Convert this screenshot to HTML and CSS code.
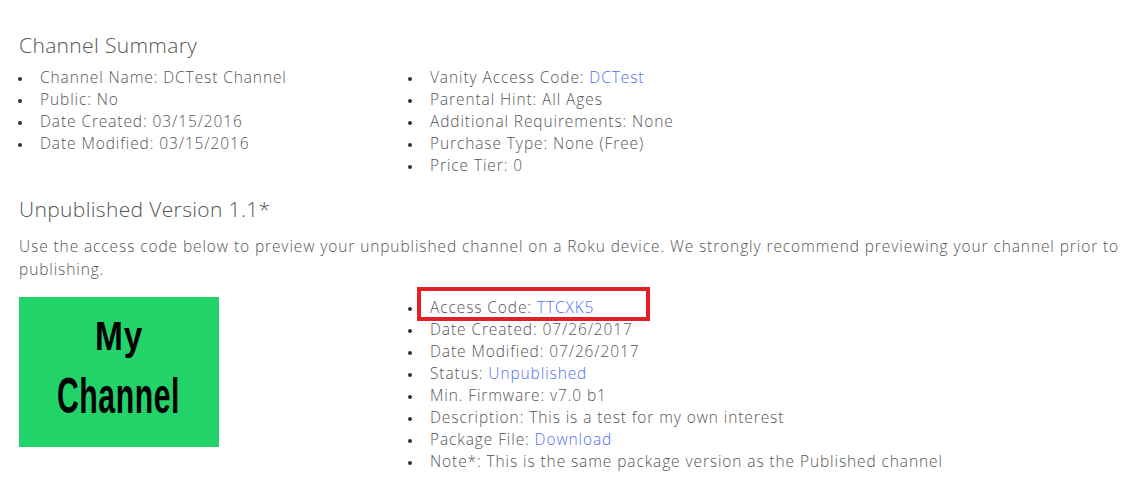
FILE: index.html
```html
<!DOCTYPE html>
<html lang="en">
<head>
<meta charset="utf-8">
<title>Channel Summary</title>
<link rel="stylesheet" href="styles.css">
</head>
<body>
<main class="page">
  <h2 class="heading">Channel Summary</h2>
  <div class="cols">
    <ul class="info">
      <li>Channel Name: DCTest Channel</li>
      <li>Public: No</li>
      <li>Date Created: 03/15/2016</li>
      <li>Date Modified: 03/15/2016</li>
    </ul>
    <ul class="info">
      <li>Vanity Access Code: <a href="#">DCTest</a></li>
      <li>Parental Hint: All Ages</li>
      <li>Additional Requirements: None</li>
      <li>Purchase Type: None (Free)</li>
      <li>Price Tier: 0</li>
    </ul>
  </div>

  <h2 class="heading heading-second">Unpublished Version 1.1*</h2>
  <p class="intro">Use the access code below to preview your unpublished channel on a Roku device. We strongly recommend previewing your channel prior to publishing.</p>

  <div class="cols cols-bottom">
    <div class="thumb">
      <svg width="200" height="150" viewBox="0 0 200 150" aria-label="My Channel">
        <rect width="200" height="150" fill="#22d36a"/>
        <text x="76" y="53" font-family="Liberation Sans Narrow, Liberation Sans, sans-serif" font-weight="bold" font-size="40" fill="#000" textLength="48" lengthAdjust="spacingAndGlyphs">My</text>
        <text x="38" y="116" font-family="Liberation Sans Narrow, Liberation Sans, sans-serif" font-weight="bold" font-size="50" fill="#000" textLength="123" lengthAdjust="spacingAndGlyphs">Channel</text>
      </svg>
    </div>
    <ul class="info info-version">
      <li class="highlighted">Access Code: <a href="#">TTCXK5</a><span class="mark"></span></li>
      <li>Date Created: 07/26/2017</li>
      <li>Date Modified: 07/26/2017</li>
      <li>Status: <a href="#">Unpublished</a></li>
      <li>Min. Firmware: v7.0 b1</li>
      <li>Description: This is a test for my own interest</li>
      <li>Package File: <a href="#">Download</a></li>
      <li>Note*: This is the same package version as the Published channel</li>
    </ul>
  </div>
</main>
</body>
</html>
```

FILE: styles.css
```css
html, body {
  margin: 0;
  padding: 0;
  background: #ffffff;
}

.page {
  padding: 31px 19px 0 19px;
  font-family: "Open Sans", "Liberation Sans", sans-serif;
  font-weight: 300;
  color: #555555;
  font-size: 15.5px;
  letter-spacing: 0.9px;
}

.heading {
  margin: 0;
  font-size: 21px;
  line-height: 28px;
  font-weight: 300;
  letter-spacing: 0.35px;
  color: #555555;
}

.heading-second {
  margin-top: 19px;
}

.cols {
  display: grid;
  grid-template-columns: 390px 1fr;
  margin-top: 7px;
}

.info {
  margin: 0;
  padding-left: 21px;
  line-height: 22px;
  list-style: none;
}

.info li::before {
  content: "";
  display: inline-block;
  width: 4px;
  height: 4px;
  border-radius: 50%;
  background: #333333;
  margin-left: -22px;
  margin-right: 18px;
  vertical-align: middle;
}

.info a {
  color: #4f6ef7;
  text-decoration: none;
}

.intro {
  margin: 12px 0 0 0;
  line-height: 23px;
}

.cols-bottom {
  margin-top: 16px;
  align-items: start;
}

.thumb svg {
  display: block;
}

.info-version {
  margin-top: -1px;
}

.highlighted {
  position: relative;
}

.mark {
  position: absolute;
  left: -13px;
  top: -9px;
  width: 233px;
  height: 34px;
  border: 4px solid #e31e24;
  box-sizing: border-box;
}
```
